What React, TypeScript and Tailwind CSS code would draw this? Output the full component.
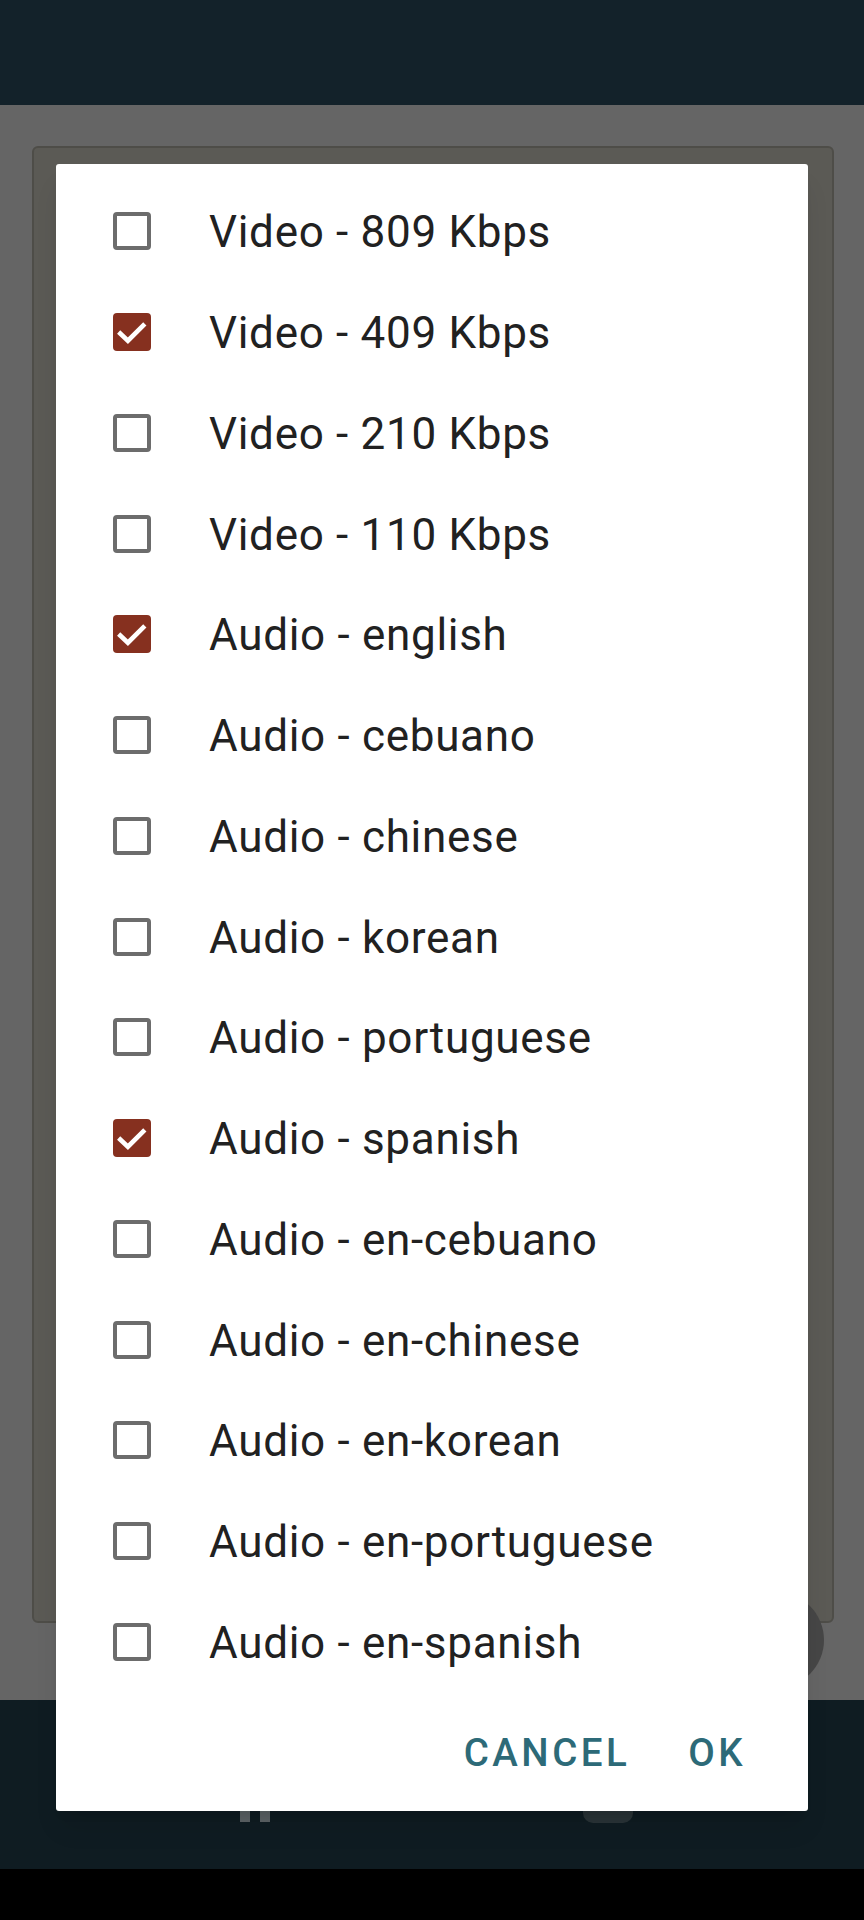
import React from "react";

const tracks = [
  { label: "Video - 809 Kbps", checked: false },
  { label: "Video - 409 Kbps", checked: true },
  { label: "Video - 210 Kbps", checked: false },
  { label: "Video - 110 Kbps", checked: false },
  { label: "Audio - english", checked: true },
  { label: "Audio - cebuano", checked: false },
  { label: "Audio - chinese", checked: false },
  { label: "Audio - korean", checked: false },
  { label: "Audio - portuguese", checked: false },
  { label: "Audio - spanish", checked: true },
  { label: "Audio - en-cebuano", checked: false },
  { label: "Audio - en-chinese", checked: false },
  { label: "Audio - en-korean", checked: false },
  { label: "Audio - en-portuguese", checked: false },
  { label: "Audio - en-spanish", checked: false },
];

const CheckBox = ({ checked }: { checked: boolean }) => {
  if (checked) {
    return (
      <div className="w-[38px] h-[38px] rounded-[4px] bg-[#86301f] flex-none">
        <svg width="38" height="38" viewBox="0 0 37 37">
          <polyline
            points="5.5,18.5 14.5,27 31,10.5"
            fill="none"
            stroke="white"
            strokeWidth="4.5"
          />
        </svg>
      </div>
    );
  }
  return (
    <div className="w-[38px] h-[38px] rounded-[4px] border-[4px] border-[#6c6c6c] flex-none" />
  );
};

export default function App() {
  return (
    <div className="relative w-[864px] h-[1920px] flex flex-col bg-black font-['Roboto',sans-serif]">
      <div className="h-[105px] bg-[#13222a]" />

      <div className="relative h-[1595px] bg-[#656565] px-[32px] pt-[41px]">
        <div className="w-[802px] h-[1477px] rounded-[6px] bg-[#5b5a55] border-2 border-[#4e4d48]" />
        <div className="absolute left-[728px] top-[1487px] w-[96px] h-[96px] rounded-full bg-[#464646]" />
      </div>

      <div className="h-[169px] bg-[#0f1c22] flex justify-between pl-[240px] pr-[231px]">
        <div className="flex gap-[10px] mt-[88px] h-[34px]">
          <div className="w-[10px] bg-[#5d6366]" />
          <div className="w-[10px] bg-[#5d6366]" />
        </div>
        <div className="w-[50px] h-[40px] mt-[83px] rounded-[10px] bg-[#2a3438]" />
      </div>

      <div className="h-[51px] bg-black" />

      <div className="absolute left-[56px] top-[164px] w-[752px] h-[1647px] rounded-[3px] bg-white shadow-xl flex flex-col">
        <div className="pt-[17px] flex flex-col">
          {tracks.map((t) => (
            <div key={t.label} className="h-[100.75px] flex items-center pl-[57px]">
              <CheckBox checked={t.checked} />
              <span className="ml-[58px] pt-[2px] text-[44px] leading-none tracking-[0.016em] text-[#212121]">
                {t.label}
              </span>
            </div>
          ))}
        </div>
        <div className="flex-1 flex justify-end items-center pr-[62px] gap-[58px] pt-[3px]">
          <span className="text-[38.5px] leading-none font-medium tracking-[0.09em] text-[#2d6a78]">
            CANCEL
          </span>
          <span className="text-[38.5px] leading-none font-medium tracking-[0.09em] text-[#2d6a78]">
            OK
          </span>
        </div>
      </div>
    </div>
  );
}
